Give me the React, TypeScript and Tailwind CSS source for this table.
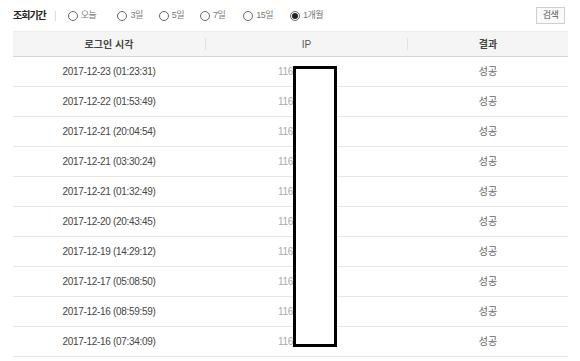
import { Fragment } from "react";

const rows = [
  "2017-12-23 (01:23:31)",
  "2017-12-22 (01:53:49)",
  "2017-12-21 (20:04:54)",
  "2017-12-21 (03:30:24)",
  "2017-12-21 (01:32:49)",
  "2017-12-20 (20:43:45)",
  "2017-12-19 (14:29:12)",
  "2017-12-17 (05:08:50)",
  "2017-12-16 (08:59:59)",
  "2017-12-16 (07:34:09)",
];

const periods = [
  { label: "오늘", w: "mr-[21px]" },
  { label: "3일", w: "mr-[16px]" },
  { label: "5일", w: "mr-[16px]" },
  { label: "7일", w: "mr-[18px]" },
  { label: "15일", w: "mr-[17px]" },
  { label: "1개월", w: "" },
];

function Radio({ checked }: { checked?: boolean }) {
  return (
    <span className="mr-[3px] flex h-[10px] w-[10px] items-center justify-center rounded-full border border-[#666] bg-white">
      {checked && <span className="h-[6px] w-[6px] rounded-full bg-[#222]" />}
    </span>
  );
}

export default function App() {
  return (
    <div className="relative h-[361px] w-[580px] overflow-hidden bg-white pl-[13px] pr-[12px] font-['Liberation_Sans','Noto_Sans_CJK_KR',sans-serif]">
      {/* period filter */}
      <div className="flex h-[31px] items-center pr-[3px]">
        <span className="text-[10px] font-bold tracking-[-1px] text-[#222]">조회기간</span>
        <span className="ml-[9px] mr-[12px] h-[10px] w-px bg-[#ddd]" />
        {periods.map((p, i) => (
          <label key={p.label} className={"flex items-center " + p.w}>
            <Radio checked={i === periods.length - 1} />
            <span className="text-[9px] tracking-[-0.5px] text-[#777]">{p.label}</span>
          </label>
        ))}
        <button className="ml-auto flex h-[17px] w-[29px] items-center justify-center border border-[#cfcfcf] bg-[#fafafa] text-[9px] tracking-[-0.5px] text-[#555]">
          검색
        </button>
      </div>

      {/* table */}
      <div className="grid grid-cols-[192px_203px_1fr] text-[10px]">
        <div className="flex h-[26px] items-center justify-center border-t border-b border-t-[#ececec] border-b-[#d6d6d6] bg-[#f5f5f5] font-bold text-[#444]">
          로그인 시각
        </div>
        <div className="relative flex h-[26px] items-center justify-center border-t border-b border-t-[#ececec] border-b-[#d6d6d6] bg-[#f5f5f5] text-[#555]">
          <span className="absolute left-0 top-[6px] h-[12px] w-px bg-[#e2e2e2]" />
          IP
          <span className="absolute right-0 top-[6px] h-[12px] w-px bg-[#e2e2e2]" />
        </div>
        <div className="flex h-[26px] items-center justify-center border-t border-b border-t-[#ececec] border-b-[#d6d6d6] bg-[#f5f5f5] font-bold text-[#444]">
          결과
        </div>

        {rows.map((d) => (
          <Fragment key={d}>
            <div className="flex h-[30px] items-center justify-center border-b border-[#e6e6e6] tracking-[-0.3px] text-[#444]">
              {d}
            </div>
            <div className="flex h-[30px] items-center border-b border-[#e6e6e6] pl-[73px] tracking-[-0.3px] text-[#aaa]">
              116.00
            </div>
            <div className="flex h-[30px] items-center justify-center border-b border-[#e6e6e6] text-[#666]">
              성공
            </div>
          </Fragment>
        ))}
      </div>

      {/* redaction box */}
      <div className="absolute left-[293px] top-[66px] h-[281px] w-[44px] border-[3px] border-black bg-white" />
    </div>
  );
}
